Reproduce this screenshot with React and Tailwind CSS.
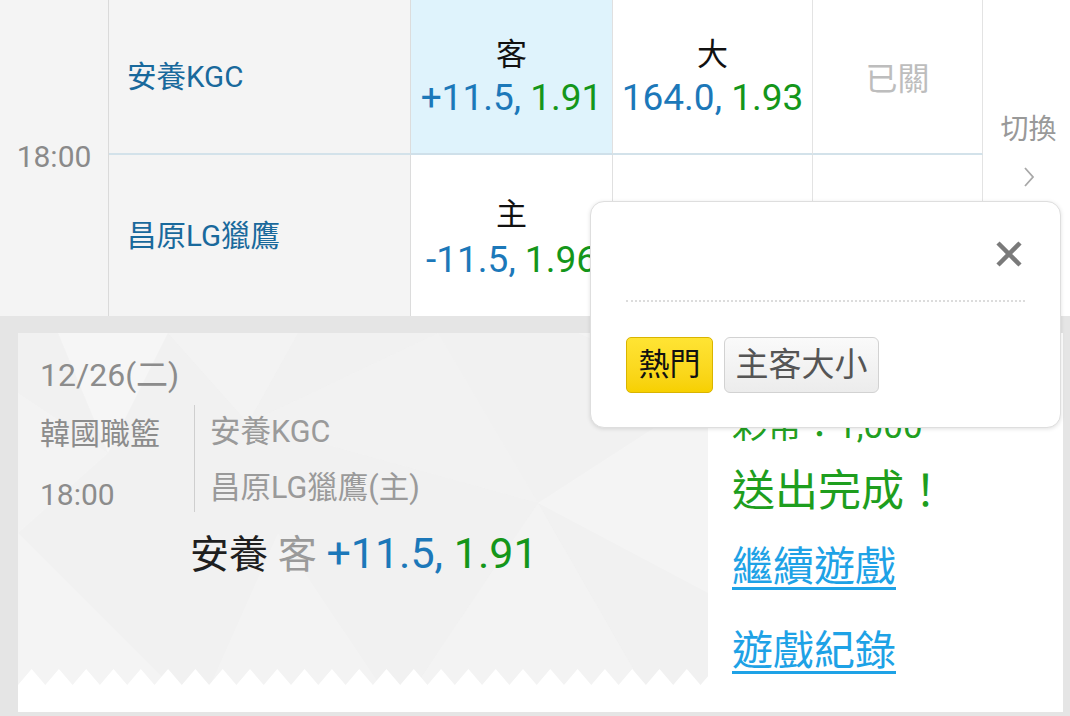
import React from 'react';

const FONT = { fontFamily: 'Roboto, "Noto Sans CJK TC", "Noto Sans", sans-serif' };

const Odds = ({ line, price }) => (
  <div className="text-[37px] leading-none whitespace-nowrap">
    <span className="text-[#1c78b9]">{line}, </span>
    <span className="text-[#14961a]">{price}</span>
  </div>
);

const ZigZag = () => {
  const pts = ['0,20'];
  for (let x = 0; x <= 700; x += 27.3) {
    pts.push(`${x.toFixed(1)},16 ${(x + 13.6).toFixed(1)},0`);
  }
  pts.push('700,16 700,20');
  return (
    <svg className="absolute left-0 bottom-[26px] w-full h-[17px]" viewBox="0 0 690 17" preserveAspectRatio="none">
      <polygon points={pts.join(' ')} fill="#ffffff" />
    </svg>
  );
};

const Facets = () => (
  <svg className="absolute inset-0 w-full h-full" viewBox="0 0 690 379" preserveAspectRatio="none">
    <polygon points="40,0 150,0 90,120" fill="#ffffff" opacity="0.35" />
    <polygon points="150,0 280,0 230,90" fill="#f6f6f6" opacity="0.5" />
    <polygon points="230,90 420,0 520,170" fill="#f5f5f5" opacity="0.45" />
    <polygon points="0,200 180,380 0,379" fill="#f5f5f5" opacity="0.55" />
    <polygon points="180,380 260,200 380,379" fill="#ffffff" opacity="0.2" />
    <polygon points="380,379 520,170 640,379" fill="#f5f5f5" opacity="0.5" />
    <polygon points="520,170 690,60 690,260" fill="#ffffff" opacity="0.25" />
    <polygon points="560,0 690,0 690,60" fill="#f6f6f6" opacity="0.5" />
    <polygon points="0,60 90,120 0,200" fill="#ffffff" opacity="0.2" />
  </svg>
);

export default function App() {
  return (
    <div className="relative w-[1070px] h-[716px] overflow-hidden bg-white" style={FONT}>
      {/* odds table */}
      <div className="flex h-[316px]">
        <div className="w-[109px] bg-[#f4f4f4] border-r border-[#dadada] flex items-center justify-center pb-[4px] text-[30px] text-[#8a8a8a]">
          18:00
        </div>
        <div className="grid grid-cols-[302px_202px_200px_170px] grid-rows-[155px_161px]">
          <div className="bg-[#f4f4f4] border-r border-b-2 border-r-[#dcdcdc] border-b-[#d3e2ea] flex items-center pl-[18px] pt-[2px] text-[29.5px] text-[#19699c]">
            安養KGC
          </div>
          <div className="bg-[#dff3fc] border-r border-b-2 border-r-[#e0e0e0] border-b-[#cfe0ea] flex flex-col items-center justify-center gap-[9px] pt-[2px]">
            <div className="text-[31px] leading-none text-[#111]">客</div>
            <Odds line="+11.5" price="1.91" />
          </div>
          <div className="border-r border-b-2 border-r-[#e3e3e3] border-b-[#d3e2ea] flex flex-col items-center justify-center gap-[9px] pt-[2px]">
            <div className="text-[31px] leading-none text-[#111]">大</div>
            <Odds line="164.0" price="1.93" />
          </div>
          <div className="border-r border-b-2 border-r-[#e3e3e3] border-b-[#d3e2ea] flex items-center justify-center pt-[4px] text-[32px] text-[#bdbdbd]">
            已關
          </div>
          <div className="bg-[#f4f4f4] border-r border-[#dcdcdc] flex items-center pl-[18px] pt-[2px] text-[29.5px] text-[#19699c]">
            昌原LG獵鷹
          </div>
          <div className="border-r border-[#e0e0e0] flex flex-col items-center justify-center gap-[11px] pt-[6px]">
            <div className="text-[31px] leading-none text-[#111]">主</div>
            <Odds line="-11.5" price="1.96" />
          </div>
          <div className="border-r border-[#e3e3e3]" />
          <div className="border-r border-[#e3e3e3]" />
        </div>
        <div className="flex-1 flex flex-col items-center justify-center gap-[22px] pb-[12px] pl-[4px]">
          <div className="text-[28px] leading-none text-[#999]">切換</div>
          <svg width="12" height="22" viewBox="0 0 12 22">
            <polyline points="2,2 10,11 2,20" fill="none" stroke="#a8a8a8" strokeWidth="1.8" />
          </svg>
        </div>
      </div>

      {/* result panel */}
      <div className="bg-[#e5e5e5] h-[400px] pt-[17px] pl-[18px] pr-[7px] pb-[4px]">
        <div className="flex h-full bg-white">
          <div className="relative w-[690px] bg-[#f1f1f1]">
            <Facets />
            <ZigZag />
            <div className="absolute left-0 right-0 bottom-0 h-[26px] bg-white" />
            <div className="relative pl-[22px] pt-[26px]">
              <div className="text-[32px] leading-[32px] text-[#8c8c8c]">12/26(二)</div>
              <div className="flex mt-[14px]">
                <div className="w-[154px] text-[30px] text-[#8c8c8c] leading-none">
                  <div className="pt-[14px]">韓國職籃</div>
                  <div className="mt-[31px]">18:00</div>
                </div>
                <div className="border-l border-[#cfcfcf] h-[107px] pl-[15px] text-[30.5px] text-[#9a9a9a] leading-none">
                  <div className="pt-[12px]">安養KGC</div>
                  <div className="mt-[25px] whitespace-nowrap">昌原LG獵鷹(主)</div>
                </div>
              </div>
              <div className="mt-[20px] pl-[150px] leading-none whitespace-nowrap">
                <span className="text-[39px] text-[#1f1f1f]">安養</span>
                <span className="text-[39px] text-[#9a9a9a]"> 客 </span>
                <span className="text-[43px] text-[#1c78b9]">+11.5, </span>
                <span className="text-[43px] text-[#14961a]">1.91</span>
              </div>
            </div>
          </div>
          <div className="flex-1 bg-white pl-[24px] pt-[76px]">
            <div className="text-[35px] leading-none text-[#22a022]">彩幣：1,000</div>
            <div className="mt-[26px] text-[43px] leading-none text-[#1e9e1e]">送出完成！</div>
            <div className="mt-[34px] text-[41px] leading-none text-[#1ea2e6] underline decoration-[3px] underline-offset-[6px]">繼續遊戲</div>
            <div className="mt-[43px] text-[41px] leading-none text-[#1ea2e6] underline decoration-[3px] underline-offset-[6px]">遊戲紀錄</div>
          </div>
        </div>
      </div>

      {/* filter popup */}
      <div className="absolute left-[590px] top-[201px] w-[471px] h-[227px] bg-white rounded-[14px] border border-[#dedede] shadow-[0_1px_4px_rgba(0,0,0,0.12)] px-[35px]">
        <div className="flex justify-end pt-[38px] pr-[2px] h-[98px]">
          <svg width="28" height="28" viewBox="0 0 28 28">
            <line x1="3" y1="3" x2="25" y2="25" stroke="#7a7a7a" strokeWidth="4.5" />
            <line x1="25" y1="3" x2="3" y2="25" stroke="#7a7a7a" strokeWidth="4.5" />
          </svg>
        </div>
        <div className="border-t-2 border-dotted border-[#dcdcdc]" />
        <div className="flex gap-[11px] mt-[35px]">
          <div className="w-[87px] h-[56px] rounded-[5px] border border-[#d9b400] bg-gradient-to-b from-[#ffe433] to-[#f7d000] flex items-center justify-center text-[31px] text-[#111]">
            熱門
          </div>
          <div className="w-[155px] h-[56px] rounded-[6px] border border-[#d2d2d2] bg-gradient-to-b from-[#fafafa] to-[#ececec] flex items-center justify-center text-[33px] text-[#555]">
            主客大小
          </div>
        </div>
      </div>
    </div>
  );
}
